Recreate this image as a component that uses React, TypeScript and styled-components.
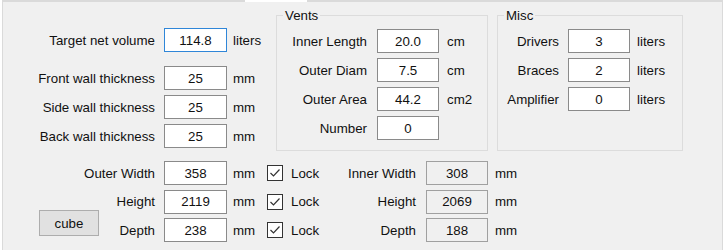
import React from "react";
import styled, { createGlobalStyle } from "styled-components";

const Global = createGlobalStyle`
  html, body { margin: 0; padding: 0; background: #ffffff; }
  body {
    font-family: "Liberation Sans", Arial, sans-serif;
    font-size: 13.3px;
    color: #111;
  }
`;

const Frame = styled.div`
  position: relative;
  margin-left: 2px;
  width: 721px;
  height: 262px;
  box-sizing: border-box;
  background: #f0f0f0;
  border: 1px solid #dadada;
  border-top: 2px solid #dadada;
  &::before {
    content: "";
    position: absolute;
    top: -2px;
    left: 242px;
    width: 62px;
    height: 2px;
    background: #ffffff;
  }
`;

const TopSection = styled.div`
  display: flex;
  align-items: stretch;
  padding-top: 6px;
`;

const LeftCol = styled.div`
  width: 273px;
  padding-top: 20px;
  display: flex;
  flex-direction: column;
  gap: 5px;
`;

const Spacer = styled.div<{ $h: number }>`
  height: ${(p) => p.$h}px;
`;

const Group = styled.fieldset<{ $w: number; $ml: number }>`
  margin: 0 0 0 ${(p) => p.$ml}px;
  padding: 0 0 10px 0;
  width: ${(p) => p.$w}px;
  box-sizing: border-box;
  min-width: 0;
  border: 1px solid #dcdcdc;
`;

const Legend = styled.legend`
  margin-left: 6px;
  padding: 0 2px;
  font-size: 13.3px;
  line-height: 15px;
`;

const GroupBody = styled.div`
  padding-top: 6px;
  display: flex;
  flex-direction: column;
  gap: 5px;
`;

const Row = styled.div<{ $cols: string }>`
  display: grid;
  grid-template-columns: ${(p) => p.$cols};
  align-items: center;
  height: 24px;
`;

const Label = styled.span<{ $pr: number }>`
  text-align: right;
  padding-right: ${(p) => p.$pr}px;
  white-space: nowrap;
`;

const Unit = styled.span<{ $pl: number }>`
  padding-left: ${(p) => p.$pl}px;
  white-space: nowrap;
`;

const Box = styled.input<{ $variant?: "normal" | "focus" | "readonly" }>`
  box-sizing: border-box;
  width: 100%;
  height: 24px;
  margin: 0;
  padding: 0;
  text-align: center;
  font-family: inherit;
  font-size: 13.3px;
  color: #111;
  outline: none;
  border: 1px solid
    ${(p) =>
      p.$variant === "focus"
        ? "#2f86d8"
        : p.$variant === "readonly"
        ? "#a0a0a0"
        : "#8a8a8a"};
  background: ${(p) => (p.$variant === "readonly" ? "#f0f0f0" : "#ffffff")};
`;

const BottomSection = styled.div`
  margin-top: 10px;
  display: flex;
  flex-direction: column;
  gap: 4.5px;
`;

const ButtonCell = styled.div`
  display: flex;
  align-items: center;
  justify-content: space-between;
  padding-left: 36px;
  padding-right: 9px;
`;

const CubeButton = styled.button`
  width: 60px;
  height: 26px;
  margin: -14px 0 0 0;
  padding: 0;
  background: #e1e1e1;
  border: 1px solid #adadad;
  font-family: inherit;
  font-size: 13.3px;
  color: #111;
`;

const CheckWrap = styled.label`
  display: inline-flex;
  align-items: center;
  gap: 8px;
`;

const CheckBox = styled.span`
  box-sizing: border-box;
  width: 16px;
  height: 16px;
  border: 1px solid #333333;
  background: #ffffff;
  display: inline-flex;
  align-items: center;
  justify-content: center;
`;

const Check = () => (
  <CheckWrap>
    <CheckBox>
      <svg width="14" height="14" viewBox="0 0 14 14">
        <polyline
          points="2.5,7 5.5,10 11.5,3.5"
          fill="none"
          stroke="#333"
          strokeWidth="1.2"
        />
      </svg>
    </CheckBox>
    Lock
  </CheckWrap>
);

const LEFT_COLS = "161px 63px auto";
const VENT_COLS = "100px 62px auto";
const MISC_COLS = "70px 62px auto";
const BOTTOM_COLS = "161px 63px 40px 60px 99px 62px auto";

type F = { label: string; value: string; unit?: string };

const vents: F[] = [
  { label: "Inner Length", value: "20.0", unit: "cm" },
  { label: "Outer Diam", value: "7.5", unit: "cm" },
  { label: "Outer Area", value: "44.2", unit: "cm2" },
  { label: "Number", value: "0" },
];

const misc: F[] = [
  { label: "Drivers", value: "3", unit: "liters" },
  { label: "Braces", value: "2", unit: "liters" },
  { label: "Amplifier", value: "0", unit: "liters" },
];

const walls: F[] = [
  { label: "Front wall thickness", value: "25", unit: "mm" },
  { label: "Side wall thickness", value: "25", unit: "mm" },
  { label: "Back wall thickness", value: "25", unit: "mm" },
];

const dims = [
  { label: "Outer Width", value: "358", inner: "Inner Width", innerValue: "308" },
  { label: "Height", value: "2119", inner: "Height", innerValue: "2069" },
  { label: "Depth", value: "238", inner: "Depth", innerValue: "188" },
];

export default function App() {
  return (
    <>
      <Global />
      <Frame>
        <TopSection>
          <LeftCol>
            <Row $cols={LEFT_COLS}>
              <Label $pr={9}>Target net volume</Label>
              <Box $variant="focus" defaultValue="114.8" />
              <Unit $pl={6}>liters</Unit>
            </Row>
            <Spacer $h={4} />
            {walls.map((w) => (
              <Row key={w.label} $cols={LEFT_COLS}>
                <Label $pr={9}>{w.label}</Label>
                <Box defaultValue={w.value} />
                <Unit $pl={6}>{w.unit}</Unit>
              </Row>
            ))}
          </LeftCol>
          <Group $w={212} $ml={0}>
            <Legend>Vents</Legend>
            <GroupBody>
              {vents.map((v) => (
                <Row key={v.label} $cols={VENT_COLS}>
                  <Label $pr={10}>{v.label}</Label>
                  <Box defaultValue={v.value} />
                  <Unit $pl={8}>{v.unit ?? ""}</Unit>
                </Row>
              ))}
            </GroupBody>
          </Group>
          <Group $w={186} $ml={9}>
            <Legend>Misc</Legend>
            <GroupBody>
              {misc.map((m) => (
                <Row key={m.label} $cols={MISC_COLS}>
                  <Label $pr={9}>{m.label}</Label>
                  <Box defaultValue={m.value} />
                  <Unit $pl={7}>{m.unit}</Unit>
                </Row>
              ))}
            </GroupBody>
          </Group>
        </TopSection>
        <BottomSection>
          {dims.map((d, i) => (
            <Row key={d.label} $cols={BOTTOM_COLS}>
              {i === 2 ? (
                <ButtonCell>
                  <CubeButton>cube</CubeButton>
                  <span>{d.label}</span>
                </ButtonCell>
              ) : (
                <Label $pr={9}>{d.label}</Label>
              )}
              <Box defaultValue={d.value} />
              <Unit $pl={6}>mm</Unit>
              <Check />
              <Label $pr={10}>{d.inner}</Label>
              <Box $variant="readonly" readOnly defaultValue={d.innerValue} />
              <Unit $pl={7}>mm</Unit>
            </Row>
          ))}
        </BottomSection>
      </Frame>
    </>
  );
}
